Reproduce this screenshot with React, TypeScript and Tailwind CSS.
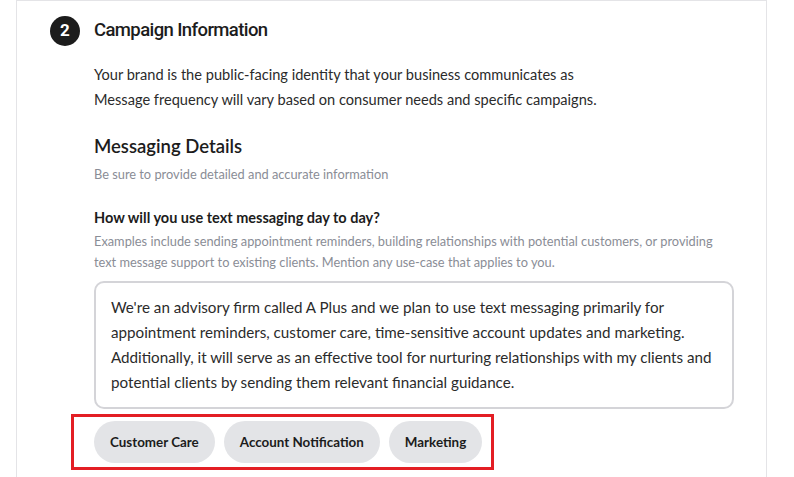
export default function App() {
  const chips = ["Customer Care", "Account Notification", "Marketing"];
  return (
    <div className="min-h-screen bg-white font-['Lato','Noto_Sans',sans-serif]">
      <div className="ml-4 w-[751px] min-h-[477px] border-x border-t border-[#e4e4e7] bg-white">
        <div className="flex items-center gap-[14px] pl-[33px] pt-[15px]">
          <span className="flex h-[30px] w-[30px] items-center justify-center rounded-full bg-[#1c1c1c] font-['Roboto',sans-serif] text-[17px] font-bold text-white">
            2
          </span>
          <h2 className="font-['Roboto',sans-serif] text-[18.5px] font-medium tracking-[-0.6px] text-[#1c1c1c]">
            Campaign Information
          </h2>
        </div>

        <div className="pl-[77px] pr-8">
          <p className="mt-[16px] text-[14.6px] leading-[25px] text-[#2b2b2b]">
            Your brand is the public-facing identity that your business communicates as
            <br />
            Message frequency will vary based on consumer needs and specific campaigns.
          </p>

          <h3 className="mt-[20px] text-[18.5px] font-semibold leading-7 text-[#1c1c1c]">Messaging Details</h3>
          <p className="mt-[5px] text-[12.8px] text-[#8a8d96]">Be sure to provide detailed and accurate information</p>

          <p className="mt-[23px] text-[14.5px] font-bold text-[#1c1c1c]">How will you use text messaging day to day?</p>
          <p className="mt-[2px] text-[12.8px] leading-[21px] text-[#8a8d96]">
            Examples include sending appointment reminders, building relationships with potential customers, or providing
            <br />
            text message support to existing clients. Mention any use-case that applies to you.
          </p>

          <div className="mt-[8px] w-[640px] whitespace-nowrap rounded-[10px] border-2 border-[#d4d4d8] px-[15px] py-[12px] text-[15.2px] leading-[25px] text-[#2b2b2b]">
            We're an advisory firm called A Plus and we plan to use text messaging primarily for
            <br />
            appointment reminders, customer care, time-sensitive account updates and marketing.
            <br />
            Additionally, it will serve as an effective tool for nurturing relationships with my clients and
            <br />
            potential clients by sending them relevant financial guidance.
          </div>

          <div className="relative mt-[12px] flex gap-[9px]">
            {chips.map((c) => (
              <span
                key={c}
                className="flex h-[42px] items-center rounded-full bg-[#e3e4e7] px-[16px] text-[13.4px] font-bold text-[#1c1c1c]"
              >
                {c}
              </span>
            ))}
            <div className="pointer-events-none absolute -top-[7px] -left-[23px] h-[56px] w-[423px] border-[3px] border-[#e31e24]" />
          </div>
        </div>
      </div>
    </div>
  );
}
